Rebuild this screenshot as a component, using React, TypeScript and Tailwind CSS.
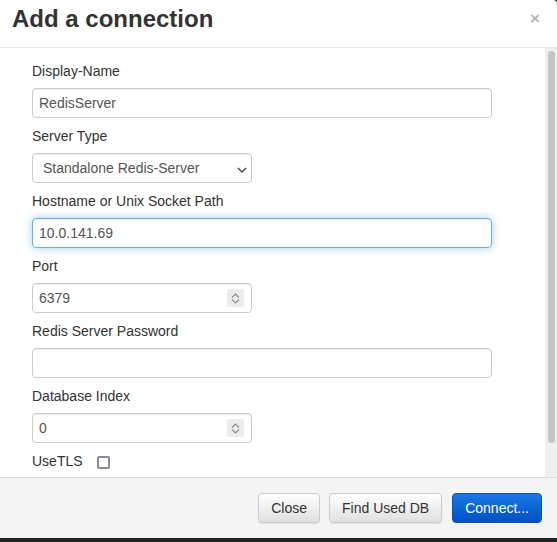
import React from "react";

const font = { fontFamily: '"Liberation Sans", Arial, sans-serif' };

function Label({ children }: { children: React.ReactNode }) {
  return <div className="text-[14px] leading-[20px] text-[#333] mb-[7px]">{children}</div>;
}

function Spinner() {
  return (
    <span className="absolute right-[7px] top-[5px] w-[17px] h-[18px] bg-[#ececec] rounded-[2px] flex flex-col items-center justify-center gap-[1px]">
      <svg width="9" height="5" viewBox="0 0 9 5"><path d="M1 4.5 L4.5 1 L8 4.5" fill="none" stroke="#8a8a8a" strokeWidth="1.1" /></svg>
      <svg width="9" height="5" viewBox="0 0 9 5"><path d="M1 0.5 L4.5 4 L8 0.5" fill="none" stroke="#8a8a8a" strokeWidth="1.1" /></svg>
    </span>
  );
}

const inputBase =
  "h-[30px] border border-[#cccccc] rounded-[4px] bg-white px-[6px] text-[14px] text-[#555] flex items-center shadow-[inset_0_1px_1px_rgba(0,0,0,0.075)]";

export default function App() {
  return (
    <div className="w-[557px] h-[542px] bg-[#232323] overflow-hidden" style={font}>
      <div className="w-[557px] h-[538px] bg-white rounded-tr-[4px] flex flex-col">
        <div className="h-[48px] border-b border-[#e5e5e5] flex items-start justify-between pl-[12px] pr-[17px]">
          <div className="text-[24px] font-bold text-[#333] leading-[28px] mt-[5px]">Add a connection</div>
          <div className="text-[17px] font-bold text-[#b8b8b8] leading-[20px] mt-[9px]">×</div>
        </div>
        <div className="flex h-[429px]">
          <div className="flex-1 pl-[32px] pt-[13px]">
            <div className="w-[460px]">
              <Label>Display-Name</Label>
              <div className={inputBase + " w-[460px] mb-[8px]"}>RedisServer</div>

              <Label>Server Type</Label>
              <div className={inputBase + " w-[220px] mb-[8px] justify-between pl-[10px] pr-[4px]"}>
                <span>Standalone Redis-Server</span>
                <svg width="10" height="6" viewBox="0 0 10 6" className="mt-[3px]"><path d="M1 1 L5 5 L9 1" fill="none" stroke="#444" strokeWidth="1.4" /></svg>
              </div>

              <Label>Hostname or Unix Socket Path</Label>
              <div className="h-[30px] w-[460px] mb-[8px] border border-[#66afe9] rounded-[4px] bg-white px-[6px] text-[14px] text-[#555] flex items-center shadow-[inset_0_1px_1px_rgba(0,0,0,0.075),0_0_8px_rgba(102,175,233,0.6)]">10.0.141.69</div>

              <Label>Port</Label>
              <div className={inputBase + " relative w-[220px] mb-[8px]"}>
                6379
                <Spinner />
              </div>

              <Label>Redis Server Password</Label>
              <div className={inputBase + " w-[460px] mb-[8px]"}></div>

              <Label>Database Index</Label>
              <div className={inputBase + " relative w-[220px] mb-[8px]"}>
                0
                <Spinner />
              </div>

              <div className="flex items-center text-[14px] leading-[20px] text-[#333]">
                <span>UseTLS</span>
                <span className="ml-[14px] mt-[2px] w-[13px] h-[13px] border-2 border-[#8f8a99] rounded-[2px] bg-white"></span>
              </div>
            </div>
          </div>
          <div className="w-[12px] bg-[#efefef] pt-[3px] pl-[3px]">
            <div className="w-[7px] h-[392px] bg-[#c4c4c4] rounded-[4px]"></div>
          </div>
        </div>
        <div className="flex-1 bg-[#f4f4f4] border-t border-[#dddddd] flex items-start justify-end pt-[15px] pr-[15px] gap-[9px]">
          <button className="h-[30px] px-[12px] leading-[26px] border border-[#cccccc] rounded-[4px] bg-gradient-to-b from-white to-[#e0e0e0] text-[14px] text-[#333] shadow-[0_1px_1px_rgba(0,0,0,0.08)]">Close</button>
          <button className="h-[30px] px-[12px] leading-[26px] border border-[#cccccc] rounded-[4px] bg-gradient-to-b from-white to-[#e0e0e0] text-[14px] text-[#333] shadow-[0_1px_1px_rgba(0,0,0,0.08)]">Find Used DB</button>
          <button className="h-[30px] px-[12px] leading-[26px] ml-[1px] border border-[#0b55b8] rounded-[4px] bg-gradient-to-b from-[#1b78e2] to-[#0050c6] text-[14px] text-white">Connect...</button>
        </div>
      </div>
    </div>
  );
}
